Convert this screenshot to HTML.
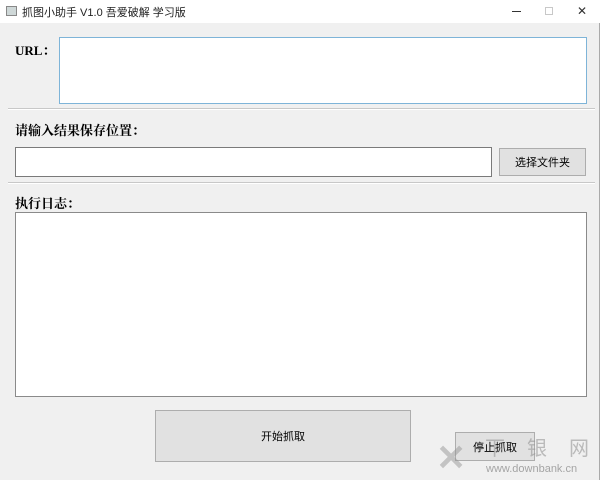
<!DOCTYPE html>
<html><head><meta charset="utf-8"><style>
*{margin:0;padding:0;box-sizing:border-box}
html,body{width:600px;height:480px;overflow:hidden}
body{background:#f0f0f0;position:relative;font-family:"Liberation Sans","Noto Sans CJK SC",sans-serif;font-size:12px;color:#000}
.a{position:absolute;white-space:nowrap}
.title{left:0;top:0;width:600px;height:23px;background:#fff}
.bold{font-family:"Liberation Serif","Noto Serif CJK SC",serif;font-weight:bold;font-size:13px}
.box{background:#fff;border:1px solid #adadad}
.btn{background:#e1e1e1;border:1px solid #adadad;display:flex;align-items:center;justify-content:center;font-size:11px}
.sep{height:2px;border-top:1px solid #c8c8c8;border-bottom:1px solid #fff}
</style></head><body>
<div class="a title"></div>
<div class="a" style="left:6px;top:6px;width:11px;height:10px;border:1px solid #888;background:#cfd8d8"></div>
<div class="a" style="left:22px;top:4px;font-size:11px;color:#222">抓图小助手 V1.0 吾爱破解 学习版</div>
<div class="a" style="left:512px;top:11px;width:9px;height:1px;background:#333"></div>
<div class="a" style="left:545px;top:7px;width:8px;height:8px;border:1px solid #c8c8c8"></div>
<div class="a" style="left:577px;top:4px;font-size:12px;color:#333">✕</div>
<div class="a" style="left:599px;top:23px;width:1px;height:457px;background:#aaa"></div>
<div class="a bold" style="left:15px;top:40px">URL：</div>
<div class="a box" style="left:59px;top:37px;width:528px;height:67px;border-color:#7eb4d8"></div>
<div class="a sep" style="left:8px;top:108px;width:587px"></div>
<div class="a bold" style="left:15px;top:120px">请输入结果保存位置：</div>
<div class="a box" style="left:15px;top:147px;width:477px;height:30px;border-color:#7a7a7a"></div>
<div class="a btn" style="left:499px;top:148px;width:87px;height:28px">选择文件夹</div>
<div class="a sep" style="left:8px;top:182px;width:587px"></div>
<div class="a bold" style="left:15px;top:193px">执行日志：</div>
<div class="a box" style="left:15px;top:212px;width:572px;height:185px;border-color:#8a8a8a"></div>
<div class="a btn" style="left:155px;top:410px;width:256px;height:52px">开始抓取</div>
<div class="a btn" style="left:455px;top:432px;width:80px;height:29px">停止抓取</div>
<div class="a" style="left:436px;top:440px;font-size:36px;line-height:36px;color:rgba(150,150,150,.5);font-weight:bold">✕</div>
<div class="a" style="left:485px;top:438px;font-size:20px;line-height:22px;color:rgba(150,150,150,.6);letter-spacing:22px">下银网</div>
<div class="a" style="left:486px;top:463px;font-size:11px;line-height:12px;color:rgba(150,150,150,.85)">www.downbank.cn</div>
</body></html>
